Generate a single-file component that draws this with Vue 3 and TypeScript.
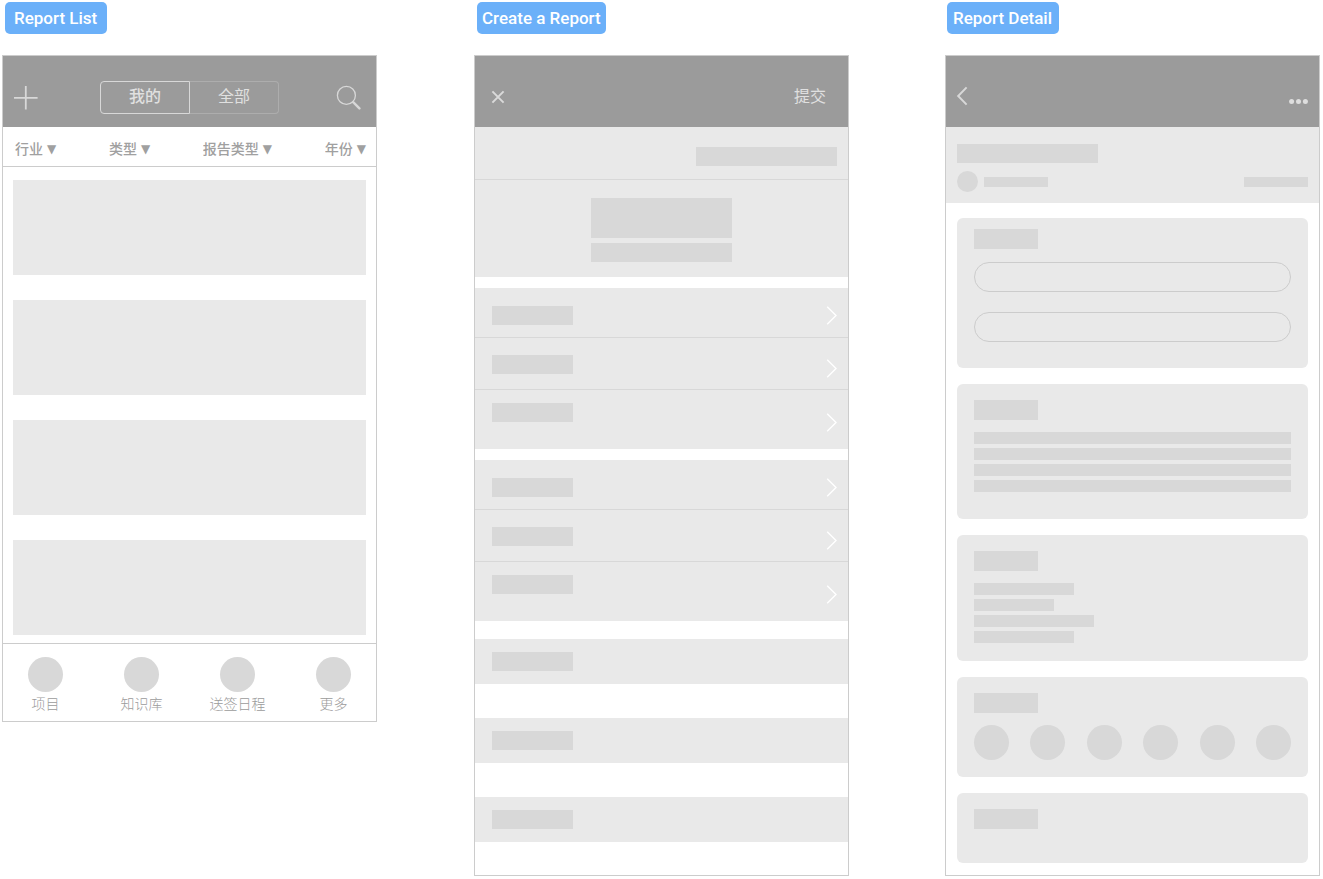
<script setup lang="ts">
import { ref } from 'vue'

const scopes: string[] = ['我的', '全部']
const activeScope = ref<string>('我的')
const filters: string[] = ['行业', '类型', '报告类型', '年份']
const tabs: string[] = ['项目', '知识库', '送签日程', '更多']
const fieldGroups: string[][] = [
  ['first', 'second', 'third'],
  ['first', 'second', 'third'],
]
const summaryLines: string[] = ['full', 'full', 'full', 'full']
const detailLines: string[] = ['medium', 'short', 'long', 'medium']
</script>

<template>
  <main class="board">
    <section class="column list-column">
      <h2 class="tag tag-list">Report List</h2>
      <div class="screen">
        <header class="bar bar-list">
          <button class="icon-button" type="button" aria-label="Add">
            <svg width="25" height="25" viewBox="0 0 25 25">
              <path d="M12.8 1v23.4M1 12.8h23.6" fill="none" stroke="#d8d8d8" stroke-width="1.8" />
            </svg>
          </button>
          <div class="segment" role="group" aria-label="Scope">
            <button
              v-for="scope in scopes"
              :key="scope"
              type="button"
              class="segment-item"
              :class="{ active: scope === activeScope }"
              :aria-pressed="scope === activeScope"
              @click="activeScope = scope"
            >
              {{ scope }}
            </button>
          </div>
          <button class="icon-button icon-end" type="button" aria-label="Search">
            <svg width="30" height="25" viewBox="0 0 30 25">
              <circle cx="10.4" cy="10.4" r="9" fill="none" stroke="#d8d8d8" stroke-width="1.3" />
              <path d="M16.4 16.4l1.2 1.2" stroke="#d8d8d8" stroke-width="1.3" />
              <path d="M17.4 17.4l6 6" stroke="#d8d8d8" stroke-width="2.4" stroke-linecap="round" />
            </svg>
          </button>
        </header>
        <div class="filters">
          <label v-for="name in filters" :key="name" class="filter">
            <select class="filter-select" :aria-label="name">
              <option>{{ name }}</option>
            </select>
            <span class="caret" aria-hidden="true">▼</span>
          </label>
        </div>
        <div class="reports">
          <article v-for="n in 4" :key="n" class="report"></article>
        </div>
        <nav class="tabs">
          <a v-for="tab in tabs" :key="tab" class="tab" href="#">
            <span class="dot dot-large"></span>
            <span>{{ tab }}</span>
          </a>
        </nav>
      </div>
    </section>

    <section class="column create-column">
      <h2 class="tag tag-create">Create a Report</h2>
      <form class="screen" @submit.prevent>
        <header class="bar bar-create">
          <button class="icon-button" type="button" aria-label="Close">
            <svg width="14" height="14" viewBox="0 0 14 14">
              <path d="M1.4 1.4l11.2 11.2M12.6 1.4L1.4 12.6" fill="none" stroke="#dadada" stroke-width="2" />
            </svg>
          </button>
          <button class="submit" type="submit">提交</button>
        </header>
        <div class="template-row"><span class="block title-block"></span></div>
        <div class="cover">
          <span class="block cover-block"></span>
          <span class="block title-block"></span>
        </div>
        <div v-for="(group, g) in fieldGroups" :key="g" class="group">
          <button
            v-for="row in group"
            :key="row"
            type="button"
            class="row"
            :class="row"
            aria-label="Edit field"
          >
            <span class="block field-block"></span>
            <svg class="chevron" width="12" height="19" viewBox="0 0 12 19">
              <path d="M2.2 0.8L11 9.5L2.2 18.2" fill="none" stroke="#fff" stroke-width="1.4" />
            </svg>
          </button>
        </div>
        <div class="sections">
          <div v-for="n in 3" :key="n" class="section-head"><span class="block field-block"></span></div>
        </div>
      </form>
    </section>

    <section class="column detail-column">
      <h2 class="tag tag-detail">Report Detail</h2>
      <div class="screen">
        <header class="bar bar-detail">
          <button class="icon-button" type="button" aria-label="Back">
            <svg width="12" height="20" viewBox="0 0 12 20">
              <path d="M10.6 1.4L2.2 10L10.6 18.6" fill="none" stroke="#d8d8d8" stroke-width="2" />
            </svg>
          </button>
          <button class="icon-button more" type="button" aria-label="More">
            <svg width="20" height="5" viewBox="0 0 20 5">
              <g fill="#dedede">
                <circle cx="2.6" cy="2.5" r="2.5" />
                <circle cx="9.5" cy="2.5" r="2.5" />
                <circle cx="16.4" cy="2.5" r="2.5" />
              </g>
            </svg>
          </button>
        </header>
        <div class="summary">
          <span class="block title-block"></span>
          <div class="byline">
            <span class="dot dot-small"></span>
            <span class="block meta-block"></span>
            <span class="block meta-block date"></span>
          </div>
        </div>
        <div class="cards">
          <article class="card card-inputs">
            <span class="block heading-block"></span>
            <input class="pill" type="text" aria-label="First value" />
            <input class="pill" type="text" aria-label="Second value" />
          </article>
          <article class="card card-text">
            <span class="block heading-block"></span>
            <div class="lines">
              <span v-for="(size, i) in summaryLines" :key="i" class="block line" :class="size"></span>
            </div>
          </article>
          <article class="card card-details">
            <span class="block heading-block"></span>
            <div class="lines">
              <span v-for="(size, i) in detailLines" :key="i" class="block line" :class="size"></span>
            </div>
          </article>
          <article class="card card-people">
            <span class="block heading-block"></span>
            <div class="people">
              <span v-for="n in 6" :key="n" class="dot dot-large"></span>
            </div>
          </article>
          <article class="card card-notes">
            <span class="block heading-block"></span>
          </article>
        </div>
      </div>
    </section>
  </main>
</template>

<style>
body {
  margin: 0;
  background: #fff;
}
</style>

<style scoped>
* {
  box-sizing: border-box;
}

.board {
  display: grid;
  grid-template-columns: minmax(0, 1fr) 97px minmax(0, 1fr) 96px minmax(0, 1fr);
  align-items: start;
  padding: 2px 3px 3px 2px;
  font-family: Roboto, "Noto Sans CJK SC", sans-serif;
  color: #9b9b9b;
}

.list-column { grid-column: 1; }
.create-column { grid-column: 3; }
.detail-column { grid-column: 5; }

.column {
  display: flex;
  flex-direction: column;
  align-items: flex-start;
  gap: 21px;
}

button,
select,
input {
  margin: 0;
  padding: 0;
  border: 0;
  background: none;
  color: inherit;
  font: inherit;
  appearance: none;
}

button {
  cursor: pointer;
}

svg {
  display: block;
}

.tag {
  margin: 0 0 0 3px;
  border-radius: 5px;
  background: #6bb0f9;
  color: #fff;
  font-size: 17px;
  font-weight: 500;
  line-height: 32px;
  white-space: nowrap;
}

.tag-list { padding: 0 10px 0 9px; }
.tag-create { padding: 0 5px; }
.tag-detail { margin-left: 2px; padding: 0 7px 0 6px; }

.screen {
  width: 100%;
  border: 1px solid #cccccc;
}

.bar {
  display: flex;
  align-items: center;
  justify-content: space-between;
  height: 71px;
  background: #9b9b9b;
}

.bar-list {
  display: grid;
  grid-template-columns: 1fr auto 1fr;
  padding: 25px 10px 13px;
}

.icon-end { justify-self: end; }
.bar-create { padding: 24px 22px 13px 16px; }
.bar-detail { padding: 22px 10px 13px; }
.more { align-self: flex-end; padding-bottom: 10px; }

.segment {
  display: flex;
  width: 179px;
  height: 33px;
}

.segment-item {
  flex: 1;
  padding-bottom: 2px;
  border: 1px solid #adadad;
  border-left: 0;
  border-radius: 0 4px 4px 0;
  color: #e0e0e0;
  font-size: 16px;
  line-height: 29px;
}

.segment-item.active {
  border: 1px solid #d8d8d8;
  border-radius: 4px 0 0 4px;
  font-weight: 500;
}

.submit {
  color: #e0e0e0;
  font-size: 16px;
  line-height: 32px;
}

.filters {
  display: flex;
  align-items: center;
  justify-content: space-between;
  height: 40px;
  padding: 4px 10px 0 12px;
  border-bottom: 1px solid #cccccc;
  color: #a0a0a0;
  font-size: 14px;
  font-weight: 500;
}

.filter {
  display: flex;
  align-items: center;
  gap: 4px;
  line-height: 20px;
}

.filter-select {
  line-height: 20px;
}

.caret {
  font-family: "DejaVu Sans", sans-serif;
  font-size: 12px;
  font-weight: 400;
}

.reports {
  display: grid;
  gap: 25px;
  padding: 13px 10px 8px;
}

.report {
  height: 95px;
  background: #e9e9e9;
}

.tabs {
  display: flex;
  justify-content: space-between;
  height: 78px;
  padding: 13px 14px 0;
  border-top: 1px solid #cccccc;
}

.tab {
  display: flex;
  flex-direction: column;
  align-items: center;
  gap: 2px;
  width: 57px;
  color: #9b9b9b;
  font-size: 14px;
  font-weight: 300;
  line-height: 20px;
  text-decoration: none;
  white-space: nowrap;
}

.block {
  display: block;
  flex: none;
  background: #d8d8d8;
}

.dot {
  flex: none;
  border-radius: 50%;
  background: #d8d8d8;
}

.dot-large { width: 35px; height: 35px; }
.dot-small { width: 21px; height: 21px; }
.title-block { width: 141px; height: 19px; }
.cover-block { width: 141px; height: 40px; }
.field-block { width: 81px; height: 19px; }
.heading-block { width: 64px; height: 20px; }
.meta-block { width: 64px; height: 10px; }

.template-row {
  display: flex;
  justify-content: flex-end;
  padding: 20px 11px 13px;
  border-bottom: 1px solid #d8d8d8;
  background: #e9e9e9;
}

.cover {
  display: flex;
  flex-direction: column;
  align-items: center;
  gap: 5px;
  padding: 18px 0 15px;
  background: #e9e9e9;
}

.group {
  margin-top: 11px;
  background: #e9e9e9;
}

.row {
  display: flex;
  align-items: flex-start;
  justify-content: space-between;
  width: 100%;
  border-bottom: 1px solid #d8d8d8;
}

.first { height: 50px; padding: 18px 11px 12px 17px; }
.second { height: 52px; padding: 17px 11px 11px 17px; }
.third { height: 59px; padding: 13px 11px 17px 17px; border-bottom: 0; }

.chevron {
  align-self: flex-end;
}

.sections {
  display: grid;
  gap: 34px;
  padding: 18px 0 33px;
}

.section-head {
  padding: 13px 17px;
  background: #e9e9e9;
}

.summary {
  padding: 17px 11px 11px;
  background: #e9e9e9;
}

.byline {
  display: flex;
  align-items: center;
  gap: 6px;
  margin-top: 8px;
}

.date {
  margin-left: auto;
}

.cards {
  display: grid;
  gap: 16px;
  padding: 15px 11px 12px;
}

.card {
  padding: 16px 17px;
  border-radius: 6px;
  background: #e9e9e9;
}

.card-inputs { padding: 11px 17px 26px; }
.card-text { padding-bottom: 27px; }
.card-details { padding-bottom: 18px; }
.card-people { padding-bottom: 17px; }
.card-notes { padding-bottom: 34px; }

.pill {
  display: block;
  width: 100%;
  height: 30px;
  margin-top: 20px;
  padding: 0 14px;
  border: 1px solid #cccccc;
  border-radius: 15px;
}

.heading-block + .pill {
  margin-top: 13px;
}

.lines {
  display: grid;
  gap: 4px;
  margin-top: 12px;
}

.line { height: 12px; }
.full { width: 100%; }
.long { width: 120px; }
.medium { width: 100px; }
.short { width: 80px; }

.people {
  display: flex;
  justify-content: space-between;
  margin-top: 12px;
}
</style>
